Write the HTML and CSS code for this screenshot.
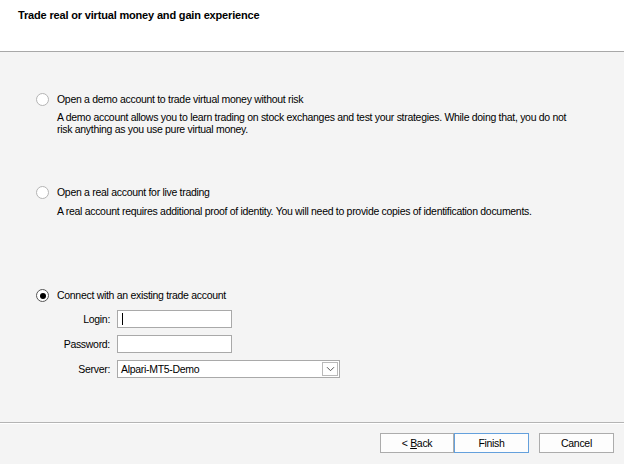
FILE: index.html
```html
<!DOCTYPE html>
<html>
<head>
<meta charset="utf-8">
<link rel="stylesheet" href="styles.css">
</head>
<body>
<div class="dialog">
  <div class="header">
    <div class="title">Trade real or virtual money and gain experience</div>
  </div>
  <div class="main">
    <div class="option opt1">
      <div class="opt-row"><span class="radio"></span><span class="label">Open a demo account to trade virtual money without risk</span></div>
      <div class="desc">A demo account allows you to learn trading on stock exchanges and test your strategies. While doing that, you do not<br>risk anything as you use pure virtual money.</div>
    </div>
    <div class="option opt2">
      <div class="opt-row"><span class="radio"></span><span class="label">Open a real account for live trading</span></div>
      <div class="desc">A real account requires additional proof of identity. You will need to provide copies of identification documents.</div>
    </div>
    <div class="option opt3">
      <div class="opt-row"><span class="radio checked"></span><span class="label">Connect with an existing trade account</span></div>
      <div class="form">
        <span class="flabel">Login:</span><span class="input short"><span class="caret"></span></span>
        <span class="flabel">Password:</span><span class="input short"></span>
        <span class="flabel">Server:</span><span class="input select"><span class="sel-text">Alpari-MT5-Demo</span><span class="drop"><svg width="9" height="6" viewBox="0 0 9 6"><path d="M1 1.2 L4.5 4.7 L8 1.2" fill="none" stroke="#555" stroke-width="1"/></svg></span></span>
      </div>
    </div>
  </div>
  <div class="footer">
    <div class="btn"><span>&lt; <u>B</u>ack</span></div>
    <div class="btn default"><span>Finish</span></div>
    <div class="btn cancel"><span>Cancel</span></div>
  </div>
</div>
</body>
</html>
```
FILE: styles.css
```css
* { box-sizing: border-box; }
html, body { margin: 0; padding: 0; }
body {
  width: 624px;
  height: 464px;
  background: #f4f4f4;
  font-family: "Liberation Sans", Arial, sans-serif;
  font-size: 10.5px;
  letter-spacing: -0.3px;
  color: #000;
  overflow: hidden;
}
.dialog { width: 624px; height: 464px; display: flex; flex-direction: column; }
.header {
  height: 52px;
  background: #fff;
  border-bottom: 1px solid #a8a8a8;
  padding: 9px 0 0 18px;
}
.title { font-weight: bold; font-size: 11px; line-height: 13px; letter-spacing: -0.17px; }
.main { height: 370px; padding-left: 36px; }
.option { display: flex; flex-direction: column; }
.opt1 { margin-top: 41px; }
.opt2 { margin-top: 51px; }
.opt3 { margin-top: 72px; }
.opt-row { display: flex; align-items: center; height: 13px; line-height: 13px; }
.radio {
  width: 13px; height: 13px; border-radius: 50%;
  border: 1px solid #b4b4b4; background: #fff;
  margin-right: 8px; flex: none;
  display: flex; align-items: center; justify-content: center;
}
.radio.checked { border-color: #555; }
.radio.checked::after {
  content: ""; width: 6px; height: 6px; border-radius: 50%; background: #000;
}
.desc { margin: 5px 0 0 21px; line-height: 12px; }
.opt2 .desc { margin-top: 6px; }
.form {
  display: grid;
  grid-template-columns: 74px auto;
  column-gap: 7px;
  row-gap: 7px;
  margin-top: 8px;
  justify-items: start;
  align-items: center;
}
.flabel { justify-self: end; line-height: 18px; }
.input {
  height: 18px; background: #fff; border: 1px solid #a9a9a9;
  display: flex; align-items: center;
}
.input.short { width: 115px; }
.caret { width: 1px; height: 12px; background: #000; margin-left: 4px; }
.input.select { width: 223px; justify-content: space-between; }
.sel-text { padding-left: 3px; }
.drop {
  width: 16px; height: 14px; margin-right: 1px; border: 1px solid #b9b9b9;
  background: #fff; display: flex; align-items: center; justify-content: center;
}
.footer {
  flex: 1;
  border-top: 1px solid #b4b4b4;
  box-shadow: inset 0 1px 0 #fff;
  display: flex;
  align-items: flex-start;
  padding: 10px 0 0 380px;
}
.btn {
  width: 74px; height: 20px; border: 1px solid #acacac; background: #fdfdfd;
  display: flex; align-items: center; justify-content: center; line-height: 12px;
}
.btn.default { border-color: #64a0dc; width: 75px; }
.btn.cancel { margin-left: 10px; width: 75px; }
u { text-decoration: underline; }
```
